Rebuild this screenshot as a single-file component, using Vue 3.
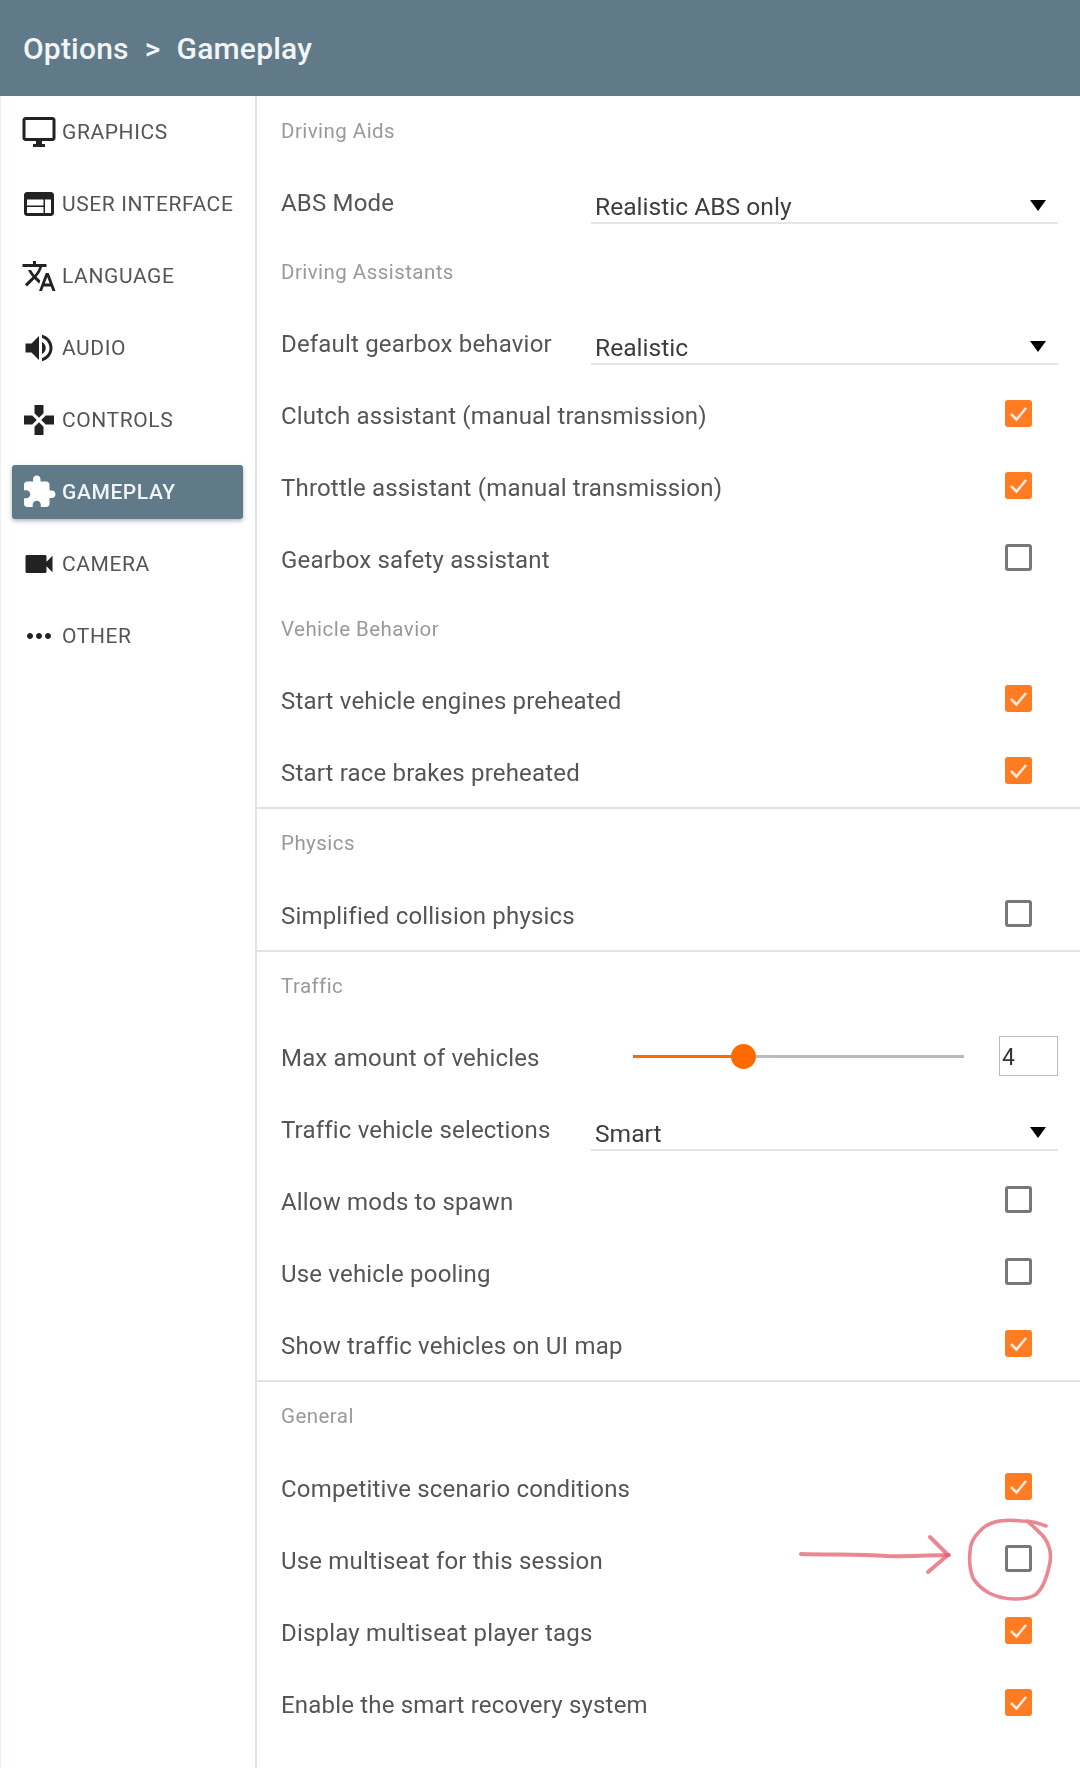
<script setup>
const nav = [
  { label: 'GRAPHICS', d: 'M21 2H3c-1.1 0-2 .9-2 2v12c0 1.1.9 2 2 2h7v2H8v2h8v-2h-2v-2h7c1.1 0 2-.9 2-2V4c0-1.1-.9-2-2-2zm0 14H3V4h18v12z' },
  { label: 'USER INTERFACE', d: 'M20 4H4c-1.1 0-1.99.9-1.99 2L2 18c0 1.1.9 2 2 2h16c1.1 0 2-.9 2-2V6c0-1.1-.9-2-2-2zm-5 14H4v-4h11v4zm0-5H4V9h11v4zm5 5h-4V9h4v9z' },
  { label: 'LANGUAGE', d: 'M12.87 15.07l-2.54-2.51.03-.03c1.74-1.94 2.98-4.17 3.71-6.53H17V4h-7V2H8v2H1v1.99h11.17C11.5 7.92 10.44 9.75 9 11.35 8.07 10.32 7.3 9.19 6.69 8h-2c.73 1.63 1.73 3.17 2.98 4.56l-5.09 5.02L4 19l5-5 3.11 3.11.76-2.04zM18.5 10h-2L12 22h2l1.12-3h4.75L21 22h2l-4.5-12zm-2.62 7l1.62-4.33L19.12 17h-3.24z' },
  { label: 'AUDIO', d: 'M3 9v6h4l5 5V4L7 9H3zm13.5 3c0-1.77-1.02-3.29-2.5-4.03v8.05c1.48-.73 2.5-2.25 2.5-4.02zM14 3.23v2.06c2.89.86 5 3.54 5 6.71s-2.11 5.85-5 6.71v2.06c4.01-.91 7-4.49 7-8.77s-2.99-7.86-7-8.77z' },
  { label: 'CONTROLS', d: 'M15 7.5V2H9v5.5l3 3 3-3zM7.5 9H2v6h5.5l3-3-3-3zM9 16.5V22h6v-5.5l-3-3-3 3zM16.5 9l-3 3 3 3H22V9h-5.5z' },
  { label: 'GAMEPLAY', active: true, d: 'M20.5 11H19V7c0-1.1-.9-2-2-2h-4V3.5C13 2.12 11.88 1 10.5 1S8 2.12 8 3.5V5H4c-1.1 0-1.99.9-1.99 2v3.8H3.5c1.49 0 2.7 1.21 2.7 2.7s-1.21 2.7-2.7 2.7H2V20c0 1.1.9 2 2 2h3.8v-1.5c0-1.49 1.21-2.7 2.7-2.7 1.49 0 2.7 1.21 2.7 2.7V22H17c1.1 0 2-.9 2-2v-4h1.5c1.38 0 2.5-1.12 2.5-2.5S21.88 11 20.5 11z' },
  { label: 'CAMERA', d: 'M17 10.5V7c0-.55-.45-1-1-1H4c-.55 0-1 .45-1 1v10c0 .55.45 1 1 1h12c.55 0 1-.45 1-1v-3.5l4 4v-11l-4 4z' },
  { label: 'OTHER', d: 'M6 10c-1.1 0-2 .9-2 2s.9 2 2 2 2-.9 2-2-.9-2-2-2zm12 0c-1.1 0-2 .9-2 2s.9 2 2 2 2-.9 2-2-.9-2-2-2zm-6 0c-1.1 0-2 .9-2 2s.9 2 2 2 2-.9 2-2-.9-2-2-2z' },
]

const sections = [
  { groups: [
    { title: 'Driving Aids', rows: [{ label: 'ABS Mode', select: 'Realistic ABS only' }] },
    { title: 'Driving Assistants', rows: [
      { label: 'Default gearbox behavior', select: 'Realistic' },
      { label: 'Clutch assistant (manual transmission)', checked: true },
      { label: 'Throttle assistant (manual transmission)', checked: true },
      { label: 'Gearbox safety assistant', checked: false },
    ] },
    { title: 'Vehicle Behavior', rows: [
      { label: 'Start vehicle engines preheated', checked: true },
      { label: 'Start race brakes preheated', checked: true },
    ] },
  ] },
  { groups: [{ title: 'Physics', rows: [{ label: 'Simplified collision physics', checked: false }] }] },
  { groups: [{ title: 'Traffic', rows: [
    { label: 'Max amount of vehicles', slider: 4 },
    { label: 'Traffic vehicle selections', select: 'Smart' },
    { label: 'Allow mods to spawn', checked: false },
    { label: 'Use vehicle pooling', checked: false },
    { label: 'Show traffic vehicles on UI map', checked: true },
  ] }] },
  { groups: [{ title: 'General', rows: [
    { label: 'Competitive scenario conditions', checked: true },
    { label: 'Use multiseat for this session', checked: false },
    { label: 'Display multiseat player tags', checked: true },
    { label: 'Enable the smart recovery system', checked: true },
  ] }] },
]
</script>

<template>
  <div class="page">
    <div class="screen">
      <header class="header">Options<span class="sep">&gt;</span>Gameplay</header>
      <div class="body">
        <nav class="side">
          <div v-for="item in nav" :key="item.label" class="nav-slot">
            <div class="nav-item" :class="{ active: item.active }">
              <svg class="nav-icon" viewBox="0 0 24 24"><path :d="item.d" /></svg>
              <span>{{ item.label }}</span>
            </div>
          </div>
        </nav>
        <main class="content">
          <section v-for="(s, i) in sections" :key="i" class="section">
            <div v-for="g in s.groups" :key="g.title" class="group">
              <div class="group-title">{{ g.title }}</div>
              <div v-for="r in g.rows" :key="r.label" class="row">
                <span class="row-label">{{ r.label }}</span>
                <div v-if="r.select" class="select">
                  <span>{{ r.select }}</span>
                  <i class="caret"></i>
                </div>
                <div v-else-if="r.slider" class="slider-wrap">
                  <div class="slider">
                    <div class="fill"></div>
                    <div class="thumb"></div>
                  </div>
                  <div class="num">{{ r.slider }}</div>
                </div>
                <div v-else class="check" :class="{ on: r.checked }">
                  <svg v-if="r.checked" viewBox="0 0 27 27"><path d="M6 14l5.5 5.5L21 8" /></svg>
                </div>
              </div>
            </div>
          </section>
        </main>
      </div>
    </div>
    <svg class="scribble" viewBox="0 0 300 110" width="300" height="110">
      <g fill="none" stroke="#e3586a" stroke-opacity=".72" stroke-linecap="round" stroke-linejoin="round">
        <path stroke-width="4" d="M21 44c30 1 58 0 86 2 24 1 44-1 62-1" />
        <path stroke-width="4" d="M150 27l18 18-20 17" />
        <path stroke-width="3.6" d="M266 16c-7-3-15-5-24-5-10-1-20-1-27 1-7 2-12 5-16 10-6 6-9 13-9 20-1 9 0 18 3 26 4 7 9 11 16 15 8 4 17 6 26 6 8 0 15-1 20-4 7-5 11-15 14-28 2-7 2-14 0-20-2-6-5-11-10-15-3-3-8-8-12-11" />
      </g>
    </svg>
  </div>
</template>

<style>
html, body { margin: 0; background: #fff; }
</style>

<style scoped>
.page {
  position: relative;
  width: 1080px;
  height: 1768px;
  overflow: hidden;
  background: #fff;
}
.screen {
  height: 100%;
  display: flex;
  flex-direction: column;
  font-family: Roboto, "Liberation Sans", sans-serif;
  filter: blur(0.6px);
}
.header {
  flex: 0 0 96px;
  box-sizing: border-box;
  display: flex;
  align-items: center;
  padding-left: 23px;
  background: #607a89;
  color: #f1f5f6;
  font-size: 30px;
  font-weight: 500;
  letter-spacing: .2px;
}
.sep { margin: 0 16px; font-size: 30px; }
.body { flex: 1; display: flex; min-height: 0; }
.side {
  flex: 0 0 257px;
  box-sizing: border-box;
  border-right: 2px solid #e2e2e2;
  border-left: 1px solid #eef1f2;
}
.nav-slot {
  height: 72px;
  padding: 9px 12px 9px 11px;
  box-sizing: border-box;
}
.nav-item {
  height: 54px;
  display: flex;
  align-items: center;
  gap: 5px;
  padding-left: 9px;
  border-radius: 3px;
  color: #555;
  font-size: 21px;
  letter-spacing: .6px;
}
.nav-icon { width: 36px; height: 36px; flex: none; fill: #222; }
.nav-item.active {
  background: #607a89;
  color: #f1f5f6;
  font-weight: 500;
  box-shadow: 0 2px 4px rgba(0, 0, 0, .3);
}
.nav-item.active .nav-icon { fill: #fff; }
.content { flex: 1; min-width: 0; }
.section { border-bottom: 2px solid #e2e2e2; }
.section:last-child { border-bottom: none; }
.group:last-child .row:last-child { margin-bottom: -2px; }
.group-title {
  height: 69px;
  box-sizing: border-box;
  padding: 21px 0 0 24px;
  color: #999;
  font-size: 20.5px;
  letter-spacing: .45px;
  line-height: 24px;
}
.section + .section .group-title { height: 70.5px; padding-top: 22px; }
.section:first-child .group:first-child .group-title { height: 71px; padding-top: 23px; }
.row {
  height: 72px;
  display: flex;
  align-items: center;
  justify-content: space-between;
  padding: 0 22px 0 24px;
}
.row-label { color: #555; font-size: 24px; letter-spacing: .18px; white-space: nowrap; }
.select {
  width: 467px;
  height: 58px;
  box-sizing: border-box;
  display: flex;
  align-items: center;
  justify-content: space-between;
  padding: 24px 12px 0 4px;
  border-bottom: 2px solid #e5e5e5;
  color: #3d3d3d;
  font-size: 24.6px;
  align-self: flex-end;
  margin-bottom: 15px;
}
.caret {
  width: 0;
  height: 0;
  border-left: 8.5px solid transparent;
  border-right: 8.5px solid transparent;
  border-top: 11px solid #000;
  margin-top: -2px;
}
.slider-wrap {
  display: flex;
  align-items: center;
  gap: 35px;
  margin-top: -4px;
}
.slider {
  position: relative;
  width: 331px;
  height: 3px;
  background: #bbb;
}
.fill {
  position: absolute;
  left: 0;
  top: 0;
  bottom: 0;
  width: 110px;
  background: #ff6a00;
}
.thumb {
  position: absolute;
  left: 98px;
  top: -11px;
  width: 25px;
  height: 25px;
  border-radius: 50%;
  background: #ff6a00;
}
.num {
  width: 59px;
  height: 40px;
  box-sizing: border-box;
  border: 1.5px solid #bbb;
  padding-left: 2px;
  color: #333;
  font-size: 23px;
  line-height: 41px;
}
.check {
  width: 27px;
  height: 27px;
  box-sizing: border-box;
  margin-right: 26px;
  margin-top: -5px;
  border: 3px solid #777;
  border-radius: 3px;
}
.check.on {
  background: #ff7c22;
  border: none;
}
.check svg { display: block; width: 27px; height: 27px; fill: none; stroke: #fde9dc; stroke-width: 2.6; }
.scribble {
  position: absolute;
  left: 780px;
  top: 1510px;
  filter: blur(.5px);
}
</style>
